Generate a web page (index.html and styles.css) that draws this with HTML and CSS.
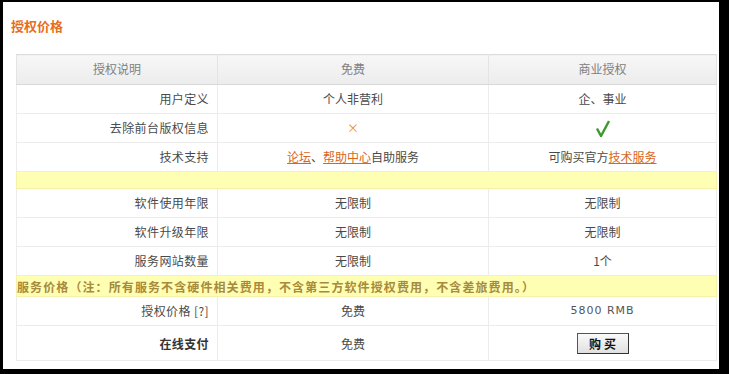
FILE: index.html
```html
<!DOCTYPE html>
<html>
<head>
<meta charset="utf-8">
<link rel="stylesheet" href="styles.css">
</head>
<body>
<div class="panel">
  <h2 class="title">授权价格</h2>
  <table class="price">
    <colgroup><col class="c1"><col class="c2"><col class="c3"></colgroup>
    <tr class="head"><th>授权说明</th><th>免费</th><th>商业授权</th></tr>
    <tr><td class="lab">用户定义</td><td>个人非营利</td><td>企、事业</td></tr>
    <tr><td class="lab">去除前台版权信息</td><td><span class="no">×</span></td><td><svg class="yes" width="14" height="17" viewBox="0 0 14 17"><path d="M1 8.5 L5 16 L13 1" fill="none" stroke="#3f9a2e" stroke-width="2.4" stroke-linejoin="miter"/></svg></td></tr>
    <tr><td class="lab">技术支持</td><td><a href="#">论坛</a>、<a href="#">帮助中心</a>自助服务</td><td>可购买官方<a href="#">技术服务</a></td></tr>
    <tr class="sep"><td colspan="3"></td></tr>
    <tr><td class="lab">软件使用年限</td><td>无限制</td><td>无限制</td></tr>
    <tr><td class="lab">软件升级年限</td><td>无限制</td><td>无限制</td></tr>
    <tr><td class="lab">服务网站数量</td><td>无限制</td><td>1个</td></tr>
    <tr class="note"><td colspan="3">服务价格（注：所有服务不含硬件相关费用，不含第三方软件授权费用，不含差旅费用。）</td></tr>
    <tr><td class="lab">授权价格 [?]</td><td>免费</td><td class="num">5800 RMB</td></tr>
    <tr class="last"><td class="lab bold">在线支付</td><td>免费</td><td><button class="buy">购买</button></td></tr>
  </table>
</div>
</body>
</html>
```
FILE: styles.css
```css
html, body {
  margin: 0;
  padding: 0;
  background: #000;
}
body {
  width: 729px;
  height: 374px;
  overflow: hidden;
  font-family: "Noto Sans CJK SC", "Noto Sans", sans-serif;
  font-size: 12px;
  color: #4a4a4a;
}
.panel {
  background: #fff;
  margin: 2px 10px 0 3px;
  height: 367px;
  padding: 15px 0 0 8px;
  box-sizing: border-box;
}
.title {
  margin: 0;
  font-size: 13px;
  line-height: 18px;
  font-weight: bold;
  color: #e86d1c;
}
.price {
  margin: 19px 0 0 5px;
  width: 700px;
  border-collapse: collapse;
  table-layout: fixed;
}
.c1 { width: 201px; }
.c2 { width: 271px; }
.c3 { width: 228px; }
.price th, .price td {
  border: 1px solid #ececec;
  height: 26px;
  padding: 0 0 2px;
  text-align: center;
  font-weight: normal;
}
.price tr.head th {
  height: 27px;
  color: #808080;
  background: linear-gradient(#f7f7f7, #ececec);
  border-color: #dcdcdc #e4e4e4 #d8d8d8;
}
.price td.lab {
  text-align: right;
  padding-right: 8px;
  letter-spacing: 0.4px;
}
.price td.bold { font-weight: bold; color: #333; }
.price a { color: #d9661a; }
.no { color: #f08a3c; }
.yes { display: inline-block; vertical-align: middle; }
.price tr.sep td {
  height: 16px;
  padding: 0;
  background: #ffffb3;
  border-color: #f6f0a8;
}
.price tr.note td {
  height: 20px;
  padding: 0;
  background: #ffffb3;
  border-color: #f6f0a8;
  text-align: left;
  font-weight: bold;
  color: #a88a3c;
  white-space: nowrap;
  letter-spacing: 1.1px;
}
.num { letter-spacing: 1px; font-family: "DejaVu Sans", sans-serif; font-size: 11px; color: #555; }
.price tr.last td { height: 34px; padding-top: 0; padding-bottom: 0; }
.buy {
  font-family: "Noto Sans CJK SC", sans-serif;
  font-size: 12px;
  font-weight: bold;
  color: #111;
  width: 52px;
  height: 21px;
  padding: 0;
  background: linear-gradient(#fafafa, #e0e0e0);
  border: 1px solid #555;
  border-right-color: #333;
  border-bottom-color: #333;
  letter-spacing: 3px;
  text-indent: 3px;
}
```
